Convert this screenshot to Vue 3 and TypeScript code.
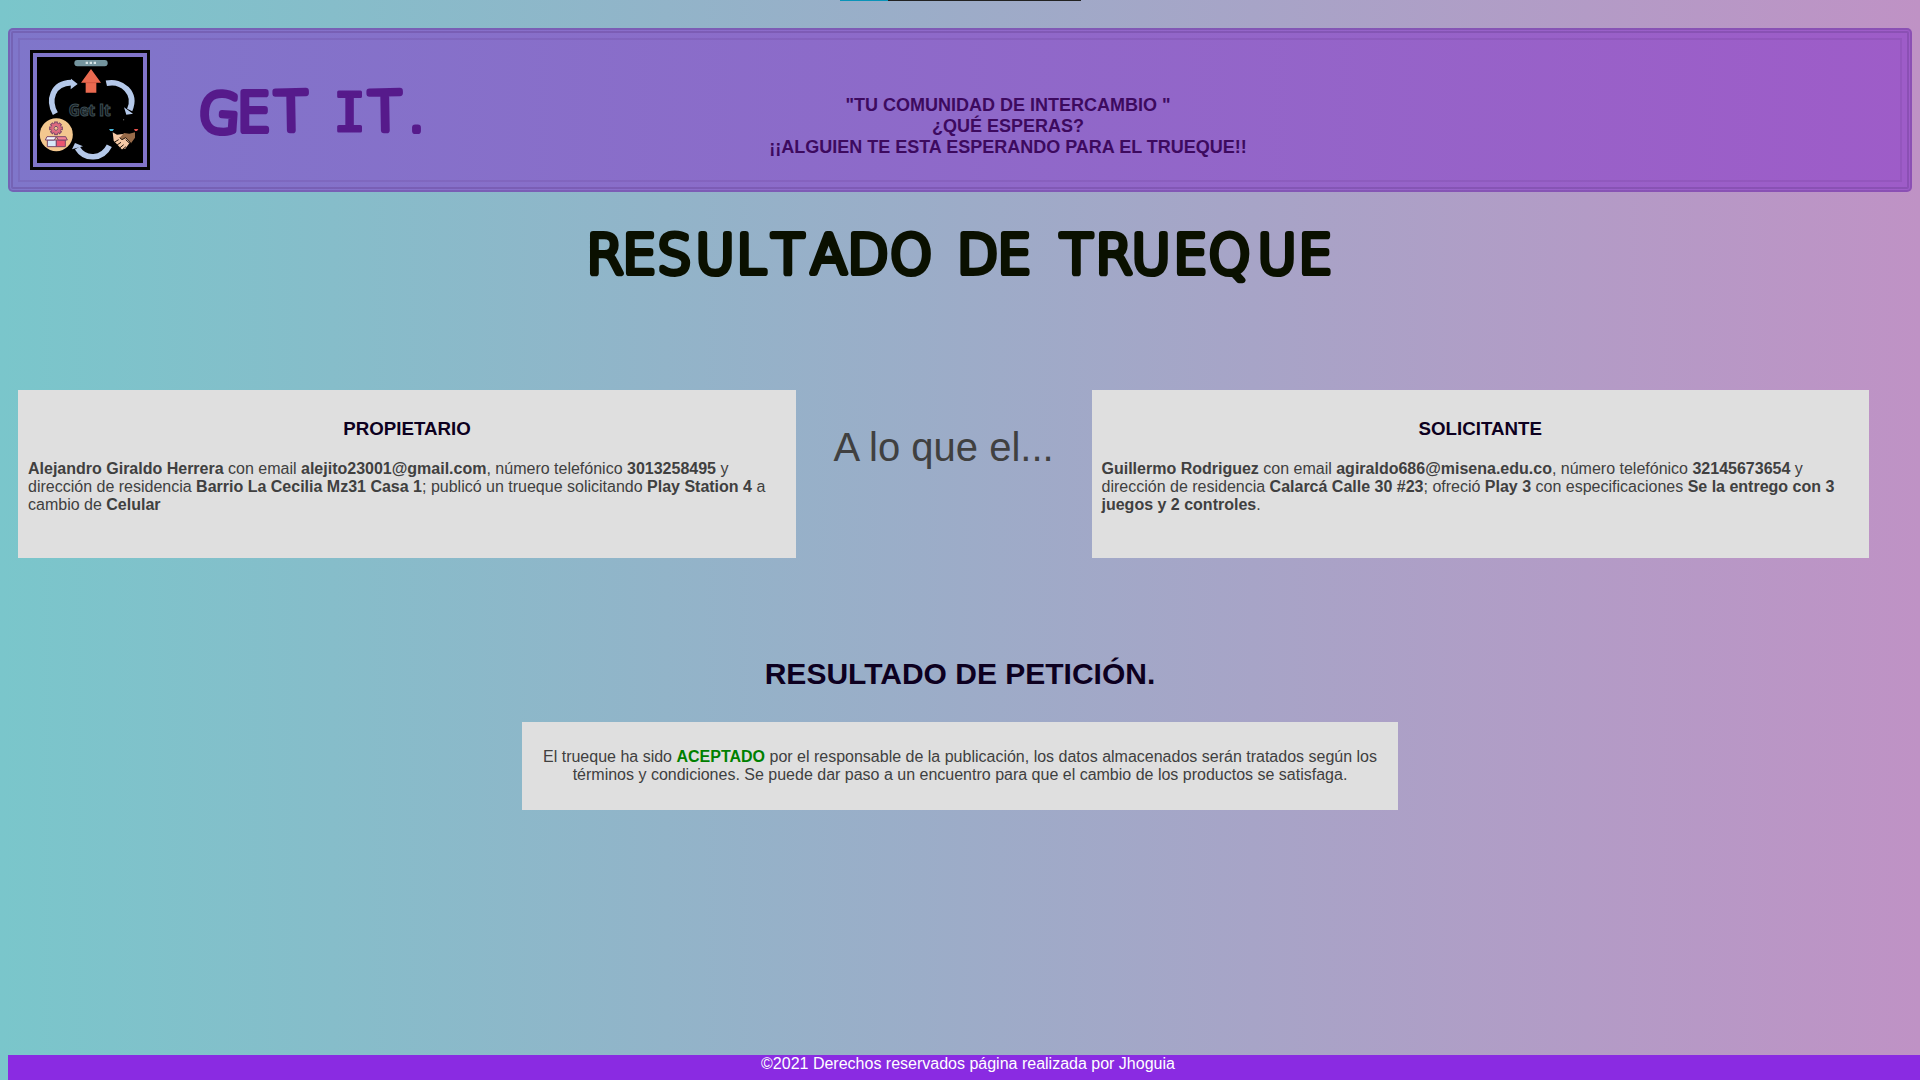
<script setup lang="ts">
const tagline: string[] = [
  '"TU COMUNIDAD DE INTERCAMBIO "',
  '¿QUÉ ESPERAS?',
  '¡¡ALGUIEN TE ESTA ESPERANDO PARA EL TRUEQUE!!',
]
const teeth: number[] = [0, 45, 90, 135, 180, 225, 270, 315]
</script>

<template>
  <div class="page">
    <div class="topbar"><i></i></div>
    <header>
      <div class="inner">
        <div class="logo">
          <svg viewBox="111 111 318 318" width="106" height="106">
            <rect x="111" y="111" width="318" height="318" fill="#000" />
            <rect x="223" y="120" width="100" height="19" rx="9" fill="#74959f" />
            <path d="M257 125h7v7h-7zM269 125h7v7h-7zM281 125h7v7h-7z" fill="#d5e4e6" />
            <path d="M273 147L303 188H289V218H257V188H243Z" fill="#ea6a50" />
            <path d="M257 188H289" stroke="#c94f3d" stroke-width="2" />
            <g fill="none" stroke="#b5c9ea" stroke-width="17">
              <path d="M166 281C143 240 157 190 214 188" />
              <path d="M319 190C366 179 411 220 389 270" />
              <path d="M328 377C307 419 255 421 232 384" />
            </g>
            <path d="M213 176L233 192L212 208ZM372 262L379 284L399 281ZM216 388L225 369L249 379Z" fill="#b5c9ea" />
            <text x="206" y="289" textLength="126" class="logotext">Get It</text>
            <circle cx="169" cy="344" r="49.500" fill="#f3c78f" />
            <g fill="none" stroke="#794668" stroke-width="3">
              <g v-for="a in teeth" :key="a" :transform="`rotate(${a} 168 325)`">
                <rect x="164" y="306" width="8" height="8" fill="#de6a80" />
              </g>
              <circle cx="168" cy="325" r="11" stroke="#de6a80" stroke-width="7" />
              <circle cx="168" cy="325" r="6" />
              <path d="M142 360V380H169V360Z" fill="#d7e8f8" />
              <path d="M169 360V380H196V360Z" fill="#e95470" />
              <path d="M141 350H169L163 360H136Z" fill="#f3f6ff" />
              <path d="M169 350H197L202 360H175Z" fill="#f48294" />
            </g>
            <path d="M327 327H342L338 333H331Z" fill="#49b8dc" />
            <path d="M402 327H415L411 333H405Z" fill="#e9534e" />
            <path d="M338 337L351 344L368 342L385 357L389 368L376 386L365 388L341 362Z" fill="#f5c8a5" />
            <path d="M405 337L388 341L372 339L359 353L366 359L377 353L393 370L405 353Z" fill="#986b49" />
            <path d="M344 366L356 359M351 375L363 367M359 384L371 374M368 388L378 380M389 370L377 359M359 353L366 359L377 353L393 370" fill="none" stroke="#24180f" stroke-width="3" />
            <circle cx="371" cy="299" r="1.500" fill="#aaa" />
          </svg>
        </div>
        <svg class="brand" width="240" height="80" viewBox="190 65 240 80">
          <text class="hand" y="130.500" x="197.500 237 275 320 333.500 369 408" rotate="4 0 -1 0 0 -1 0">GET <tspan class="slab">I</tspan>T.</text>
        </svg>
        <div class="tagline">
          <div v-for="line in tagline" :key="line">{{ line }}</div>
        </div>
      </div>
    </header>
    <svg class="title" width="780" height="80" viewBox="570 210 780 80">
      <text class="hand" y="273" x="586.500 622.500 657.500 695.500 736.500 771.500 810.500 847.500 890 940 957 997.500 1040 1060 1095.500 1131.500 1173.500 1208.500 1257.500 1298.500">RESULTADO DE TRUEQUE</text>
    </svg>
    <main>
      <section class="card owner">
        <h3>PROPIETARIO</h3>
        <p><b>Alejandro Giraldo Herrera</b> con email <b>alejito23001@gmail.com</b>, número telefónico <b>3013258495</b> y dirección de residencia <b>Barrio La Cecilia Mz31 Casa 1</b>; publicó un trueque solicitando <b>Play Station 4</b> a cambio de <b>Celular</b></p>
      </section>
      <div class="versus">A lo que el...</div>
      <section class="card asker">
        <h3>SOLICITANTE</h3>
        <p><b>Guillermo Rodriguez</b> con email <b>agiraldo686@misena.edu.co</b>, número telefónico <b>32145673654</b> y dirección de residencia <b>Calarcá Calle 30 #23</b>; ofreció <b>Play 3</b> con especificaciones <b>Se la entrego con 3 juegos y 2 controles</b>.</p>
      </section>
    </main>
    <h2>RESULTADO DE PETICIÓN.</h2>
    <div class="result">El trueque ha sido <b>ACEPTADO</b> por el responsable de la publicación, los datos almacenados serán tratados según los términos y condiciones. Se puede dar paso a un encuentro para que el cambio de los productos se satisfaga.</div>
    <footer>©2021 Derechos reservados página realizada por Jhoguia</footer>
  </div>
</template>

<style>
html, body { margin: 0; overflow: hidden; }
</style>

<style scoped>
.page {
  width: 1920px;
  height: 1080px;
  overflow: hidden;
  display: flex;
  flex-direction: column;
  background: linear-gradient(to right, #7ac6cb, #bf92c5);
  font: 16px/18px "Liberation Sans", Arial, sans-serif;
  color: #404040;
}
.topbar { width: 241px; height: 1px; margin: 0 0 27px 840px; background: #222; flex: none; }
.topbar i { display: block; width: 48px; height: 1px; background: #0a93b8; }
header {
  box-sizing: border-box;
  flex: none;
  height: 164px;
  margin: 0 8px;
  border: 5px double rgba(90, 50, 130, .28);
  border-radius: 5px;
  padding: 5px;
  background: linear-gradient(to right, #7f76ca, #9e5cc8) border-box;
}
.inner {
  box-sizing: border-box;
  height: 144px;
  border: 2px solid rgba(90, 50, 130, .14);
  display: flex;
  align-items: flex-start;
  padding: 10px;
}
.logo { width: 106px; height: 106px; padding: 4px; border: 3px solid #050505; }
.logo svg { display: block; }
.logotext {
  font: bold 46px "Open Sans", sans-serif;
  fill: #0d1316;
  stroke: #3d4d53;
  stroke-width: 3;
}
.brand { margin: 15px 0 0 40px; overflow: visible; }
.hand {
  font: 200 53.5px "DejaVu Sans", "DejaVu Sans Light", sans-serif;
  stroke-width: 6.2;
  stroke-linejoin: round;
  stroke-linecap: round;
}
.slab { font-family: "DejaVu Sans Mono", monospace; stroke-width: 3.2; }
.brand .hand { fill: #561a8b; stroke: #561a8b; }
.title { margin: 18px 0 0 570px; flex: none; overflow: visible; }
.title .hand { fill: #0a1000; stroke: #0a1000; }
.tagline {
  width: 600px;
  margin: 45px 0 0 278px;
  text-align: center;
  font-size: 18px;
  font-weight: bold;
  line-height: 21px;
  color: #3d0a5f;
}
main { display: flex; height: 168px; margin: 100px 0 0 18px; flex: none; }
.card { box-sizing: border-box; background: #dfdfdf; padding: 28px 10px 0; }
.owner { width: 778px; }
.asker { width: 777px; padding-left: 9.500px; }
h3 { margin: 0; font-size: 18.72px; line-height: 21px; text-align: center; color: #0d0020; }
p { margin: 21px 0 0; }
.versus { width: 296px; box-sizing: border-box; padding: 34px 0 0 37.500px; font-size: 40px; line-height: 46px; }
h2 { margin: 98px 0 0; text-align: center; font-size: 30px; line-height: 35px; color: #0d0020; }
.result {
  box-sizing: border-box;
  width: 876px;
  height: 88px;
  margin: 31px auto 0;
  padding: 26px 15px 0;
  background: #dfdfdf;
  text-align: center;
  flex: none;
}
.result b { color: #008000; }
footer { margin: auto 0 0 8px; width: 1920px; height: 25px; flex: none; background: #8a2be2; color: #fff; text-align: center; }
</style>
